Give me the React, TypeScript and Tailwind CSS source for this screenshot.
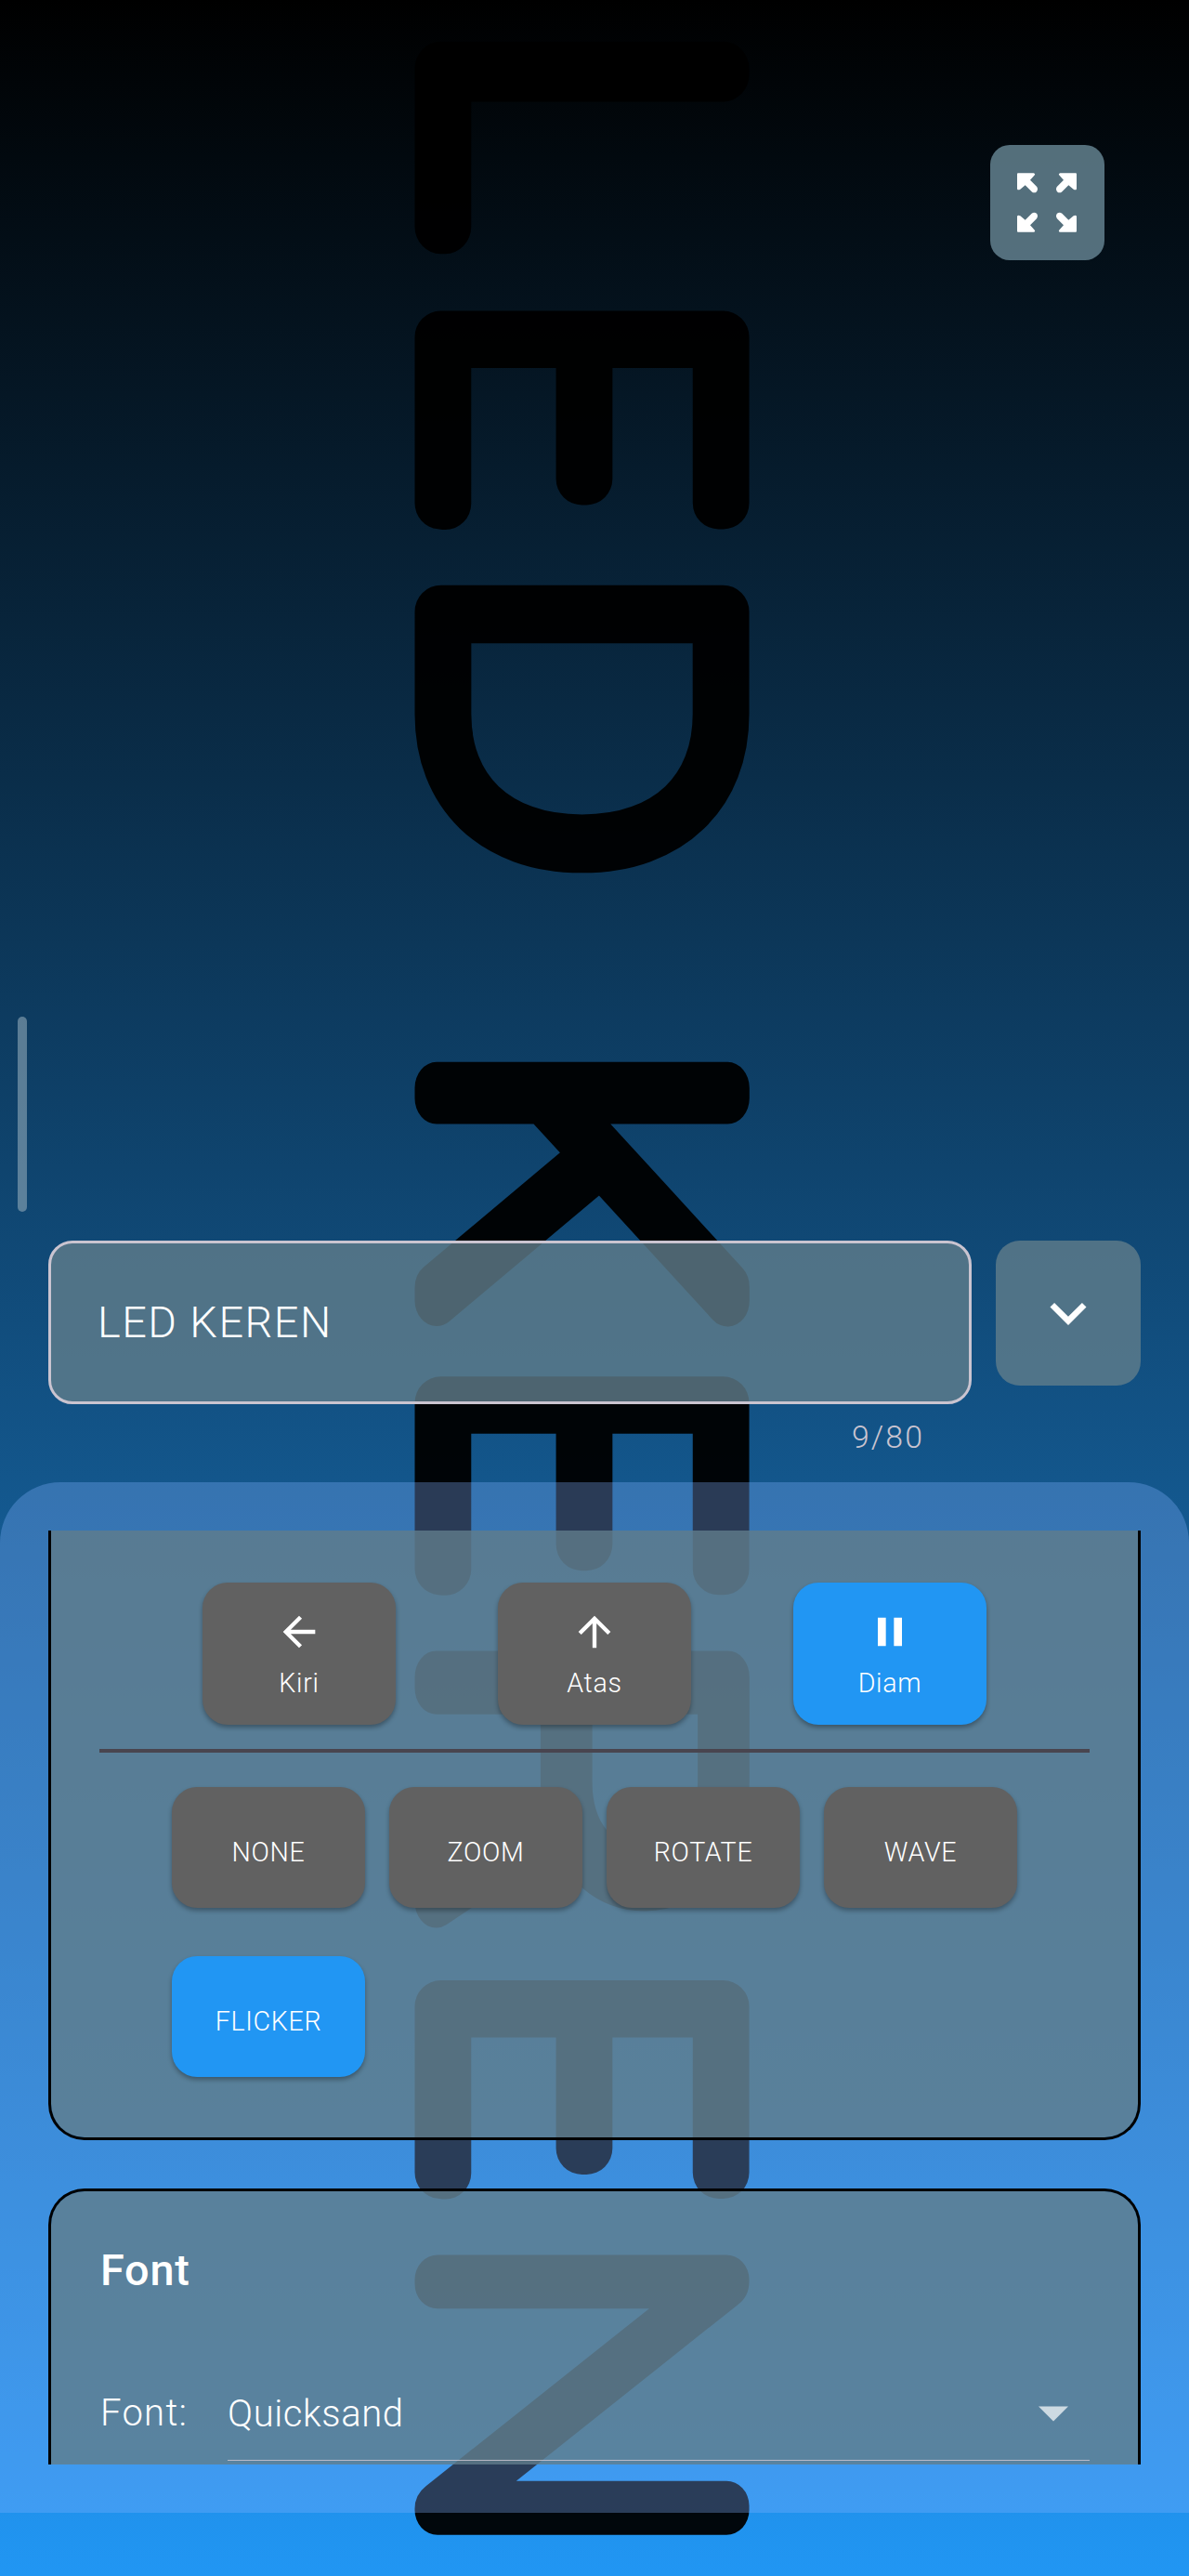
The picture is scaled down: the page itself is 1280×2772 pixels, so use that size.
import React from "react";

// Proportions of the hairline faces that the thick rounded stroke is laid on.
const FACES = {
  lato: { family: 'Lato, "Liberation Sans", sans-serif', cap: 0.701, stem: 0.116 },
  inter: { family: 'Inter, "Liberation Sans", sans-serif', cap: 0.728, stem: 0.114 },
};

type BannerLetter = {
  char: string;
  face: keyof typeof FACES;
  top: number;
  stretch: number;
  stroke: number;
};

const BANNER: BannerLetter[] = [
  { char: "L", face: "lato", top: 44.8, stretch: 1.056, stroke: 56 },
  { char: "E", face: "lato", top: 334.5, stretch: 1.006, stroke: 56 },
  { char: "D", face: "lato", top: 629.7, stretch: 1.014, stroke: 56.5 },
  { char: "K", face: "inter", top: 1143.2, stretch: 1.178, stroke: 47 },
  { char: "E", face: "lato", top: 1481.3, stretch: 1.006, stroke: 56 },
  { char: "R", face: "inter", top: 1776.8, stretch: 1.227, stroke: 46 },
  { char: "E", face: "lato", top: 2131, stretch: 1.006, stroke: 56 },
  { char: "N", face: "lato", top: 2426.5, stretch: 1.082, stroke: 49 },
];

const BANNER_LEFT = 446.5;
const BANNER_HEIGHT = 360.5;

function Banner() {
  return (
    <svg
      className="pointer-events-none absolute inset-0 opacity-95"
      width="1280"
      height="2772"
      viewBox="0 0 1280 2772"
    >
      {BANNER.map((l) => {
        const face = FACES[l.face];
        const size = (BANNER_HEIGHT - l.stroke) / face.cap;
        const x = BANNER_LEFT + l.stroke / 2;
        const y = l.top - (face.stem * size - l.stroke / 2) * l.stretch;
        return (
          <text
            key={l.top}
            transform={`translate(${x} ${y}) rotate(90) scale(${l.stretch} 1)`}
            fontFamily={face.family}
            fontWeight="100"
            fontSize={size}
            fill="#000"
            stroke="#000"
            strokeWidth={l.stroke}
            strokeLinejoin="round"
          >
            {l.char}
          </text>
        );
      })}
    </svg>
  );
}

const ARROW =
  "M108 108H158Q165 110 161 115L147 131L168 152Q174 160 168 168Q160 175 152 168L131 147L115 161Q107 165 105 159V111Q105 108 108 108Z";

function ExpandIcon() {
  return (
    <svg width="64" height="64" viewBox="105 107.5 192 192" fill="#fff">
      <path d={ARROW} />
      <path d={ARROW} transform="translate(402 0) scale(-1 1)" />
      <path d={ARROW} transform="translate(0 407) scale(1 -1)" />
      <path d={ARROW} transform="translate(402 407) scale(-1 -1)" />
    </svg>
  );
}

function Icon({ d, size }: { d: string; size: number }) {
  return (
    <svg width={size} height={size} viewBox="0 0 24 24" fill="currentColor" className="shrink-0">
      <path d={d} />
    </svg>
  );
}

const LEFT = "M20 11H7.83l5.59-5.59L12 4l-8 8 8 8 1.41-1.41L7.83 13H20v-2z";
const UP = "M4 12l1.41 1.41L11 7.83V20h2V7.83l5.58 5.59L20 12l-8-8-8 8z";
const PAUSE = "M6 19h4V5H6v14zm8-14v14h4V5h-4z";
const DOWN = "M7.41 8.59 12 13.17l4.59-4.58L18 10l-6 6-6-6z";

const DIRECTIONS = [
  { label: "Kiri", icon: LEFT, active: false },
  { label: "Atas", icon: UP, active: false },
  { label: "Diam", icon: PAUSE, active: true },
];

const EFFECTS = [
  { label: "NONE", active: false },
  { label: "ZOOM", active: false },
  { label: "ROTATE", active: false },
  { label: "WAVE", active: false },
  { label: "FLICKER", active: true },
];

const BUTTON =
  "flex w-[208px] rounded-[27px] text-[28.6px] leading-[34px] font-[360] tracking-[0.7px] shadow-[0_3px_5px_rgba(0,0,0,0.32)]";

export default function App() {
  return (
    <div className="relative h-[2772px] w-[1280px] overflow-hidden bg-[linear-gradient(to_bottom,#000,#2196f3)] font-['Roboto','Liberation_Sans',sans-serif] text-white">
      <Banner />
      <div className="relative flex h-full flex-col">
        <div className="flex h-[1335px] shrink-0 justify-between">
          <div className="mt-[1094px] ml-[19px] h-[210px] w-[10px] rounded-full bg-[#8fa9b8]/60" />
          <button className="mt-[156px] mr-[91px] flex h-[123.5px] w-[123.5px] items-center justify-center rounded-[21px] bg-[#607d8b]/88">
            <ExpandIcon />
          </button>
        </div>

        <div className="flex h-[260px] shrink-0 items-start justify-between px-[52px]">
          <div className="w-[994px]">
            <div className="flex h-[176px] items-center rounded-[26px] border-[3px] border-[#cac4d0] bg-[#607d8b]/80 pl-[50px] text-[46.8px] font-light tracking-[1.5px]">
              LED KEREN
            </div>
            <div className="mt-4 pr-[51px] text-right text-[33.8px] leading-[40px] font-light tracking-[2.1px] text-[#cac4d0]">
              9/80
            </div>
          </div>
          <button className="flex h-[156px] w-[156px] items-center justify-center rounded-[26px] bg-[#607d8b]/80">
            <Icon d={DOWN} size={78} />
          </button>
        </div>

        <div className="h-[1109px] shrink-0 rounded-t-[65px] bg-[#82b1ff]/32 px-[52px] py-[52px]">
          <div className="flex h-[1005px] flex-col gap-[52px] overflow-hidden">
            <section className="h-[656px] shrink-0 rounded-b-[39px] border-[3px] border-t-0 border-black bg-[#607d8b]/80 bg-clip-padding px-[52px] pt-[56px]">
              <div className="flex justify-center gap-[110px]">
                {DIRECTIONS.map((b) => (
                  <button
                    key={b.label}
                    className={`${BUTTON} h-[153px] flex-col items-center justify-center gap-3 pb-0.5 ${b.active ? "bg-[#2196f3]" : "bg-[#616161]"}`}
                  >
                    <Icon d={b.icon} size={52} />
                    <span>{b.label}</span>
                  </button>
                ))}
              </div>
              <div className="mt-[26px] h-[4px] bg-[#49454f]" />
              <div className="mt-[37px] flex flex-wrap gap-x-[26px] gap-y-[52px] pl-[78px]">
                {EFFECTS.map((b) => (
                  <button
                    key={b.label}
                    className={`${BUTTON} h-[130px] items-center justify-center pt-[10px] ${b.active ? "bg-[#2196f3]" : "bg-[#616161]"}`}
                  >
                    {b.label}
                  </button>
                ))}
              </div>
            </section>

            <section className="h-[420px] shrink-0 rounded-t-[39px] border-[3px] border-b-0 border-black bg-[#607d8b]/80 bg-clip-padding px-[52px] pt-[57px]">
              <h2 className="pl-px text-[46.8px] leading-[56px] font-[460] tracking-[0.8px]">Font</h2>
              <div className="mt-[74px] flex h-[103px] items-center font-light">
                <span className="w-[138px] pl-px text-[40px] leading-[48px] tracking-[1.3px]">Font:</span>
                <div className="flex h-full flex-1 items-center justify-between border-b border-[#cac4d0]/85 pr-[23px]">
                  <span className="pt-[3px] text-[40px] leading-[48px] tracking-[0.6px]">Quicksand</span>
                  <svg width="32" height="17" viewBox="0 0 32 17" className="mt-0.5">
                    <path d="M0 0.5H32L16 16.5Z" fill="#cddae2" />
                  </svg>
                </div>
              </div>
            </section>
          </div>
        </div>
      </div>
    </div>
  );
}
